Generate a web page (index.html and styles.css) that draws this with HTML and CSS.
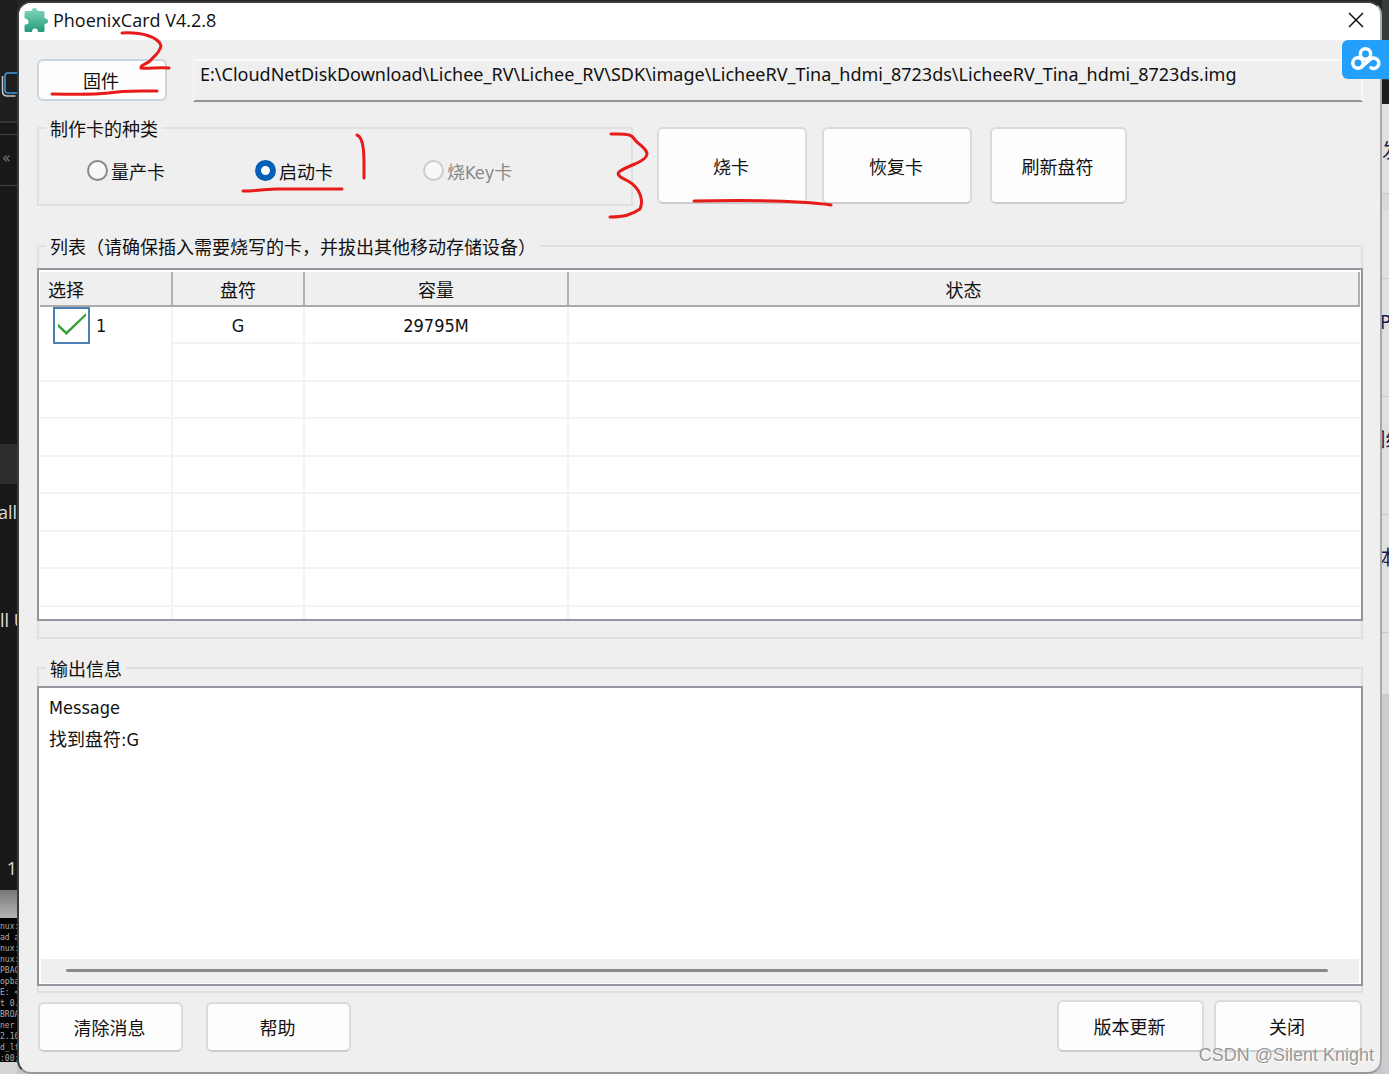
FILE: index.html
```html
<!DOCTYPE html>
<html lang="zh-CN">
<head>
<meta charset="utf-8">
<title>PhoenixCard V4.2.8</title>
<link rel="stylesheet" href="styles.css">
</head>
<body>
<div class="desktop">
  <aside class="behind-left" aria-hidden="true">
    <div class="editor">
      <div class="editor-top"><svg width="18" height="28" viewBox="0 0 18 28" fill="none"><path d="M2.500 6v15q0 5 5 5h8" stroke="#c8c8c8" stroke-width="1.500"/><rect x="5" y="3" width="20" height="20" rx="3" stroke="#3f9fe0" stroke-width="1.500"/></svg></div>
      <div class="editor-tabs"></div>
      <div class="editor-crumb">«</div>
      <div class="editor-space"></div>
      <div class="editor-active"></div>
      <div class="editor-word">tall</div>
      <div class="editor-word second">ll U</div>
      <div class="editor-page">1</div>
    </div>
    <div class="ledge"></div>
    <div class="terminal">
      <span>nux:</span><span>ad a</span><span>nux:</span><span>nux:</span><span>PBAC</span><span>opba</span><span>E: &lt;</span><span>t 0.</span><span>BROA</span><span>ner </span><span>2.16</span><span>d_lf</span><span>:00:</span>
    </div>
  </aside>

  <main class="window">
    <header class="titlebar">
      <svg class="app-icon" width="24" height="24" viewBox="0 0 24 24">
        <defs><linearGradient id="jig" x1="0" y1="0" x2="0" y2="1"><stop offset="0" stop-color="#7fd8c0"/><stop offset="1" stop-color="#259a78"/></linearGradient></defs>
        <path d="M2 3h5q1 0 .8-1Q8 0 10.500 0T13.200 2q-.2 1 .8 1h5q1.500 0 1.500 1.500v5q0 1 1 .9 2.500-.2 2.500 2.600t-2.500 2.800q-1-.1-1 .9v6q0 1.300-1.500 1.300h-4.500q-.8 0-.7-1 .2-2.500-2.800-2.500t-2.800 2.500q.1 1-.8 1H2q-1.500 0-1.500-1.300v-5.200q0-1 1-1 3 0 3-2.500T1.500 10.500q-1 0-1-1v-5Q.5 3 2 3z" fill="url(#jig)"/>
      </svg>
      <h1>PhoenixCard V4.2.8</h1>
      <button class="close" type="button" aria-label="关闭窗口"><svg width="16" height="16" viewBox="0 0 16 16" stroke="#111" stroke-width="1.500"><path d="M1 1l14 14M15 1L1 15"/></svg></button>
    </header>

    <form class="content">
      <div class="firmware">
        <button class="btn pick" type="button">固件</button>
        <output class="path" aria-label="固件路径">E:\CloudNetDiskDownload\Lichee_RV\Lichee_RV\SDK\image\LicheeRV_Tina_hdmi_8723ds\LicheeRV_Tina_hdmi_8723ds.img</output>
      </div>

      <div class="actions">
        <fieldset class="group kinds">
          <legend>制作卡的种类</legend>
          <div class="options">
            <label><input type="radio" name="kind">量产卡</label>
            <label><input type="radio" name="kind" checked>启动卡</label>
            <label class="off"><input type="radio" name="kind" disabled>烧Key卡</label>
          </div>
        </fieldset>
        <div class="big-buttons">
          <button class="btn big" type="button">烧卡</button>
          <button class="btn big" type="button">恢复卡</button>
          <button class="btn big last" type="button">刷新盘符</button>
        </div>
      </div>

      <fieldset class="group list">
        <legend>列表（请确保插入需要烧写的卡，并拔出其他移动存储设备）</legend>
        <div class="frame table-frame">
          <table>
            <colgroup><col class="c1"><col class="c2"><col class="c3"><col></colgroup>
            <thead><tr><th>选择</th><th>盘符</th><th>容量</th><th>状态</th></tr></thead>
            <tbody>
              <tr><td><label class="pickrow"><input type="checkbox" checked><span>1</span></label></td><td>G</td><td>29795M</td><td></td></tr>
              <tr><td></td><td></td><td></td><td></td></tr>
              <tr><td></td><td></td><td></td><td></td></tr>
              <tr><td></td><td></td><td></td><td></td></tr>
              <tr><td></td><td></td><td></td><td></td></tr>
              <tr><td></td><td></td><td></td><td></td></tr>
              <tr><td></td><td></td><td></td><td></td></tr>
              <tr><td></td><td></td><td></td><td></td></tr>
              <tr class="cut"><td></td><td></td><td></td><td></td></tr>
            </tbody>
          </table>
        </div>
      </fieldset>

      <fieldset class="group log">
        <legend>输出信息</legend>
        <div class="frame log-frame">
          <div class="messages"><p>Message</p><p>找到盘符:G</p></div>
          <div class="scrollbar"><div class="thumb"></div></div>
        </div>
      </fieldset>

      <footer class="bottom">
        <button class="btn" type="button">清除消息</button>
        <button class="btn" type="button">帮助</button>
        <button class="btn update" type="button">版本更新</button>
        <button class="btn quit" type="button">关闭</button>
      </footer>
    </form>
  </main>

  <aside class="behind-right" aria-hidden="true">
    <div class="r-top"></div><div class="r-bar"></div>
    <div class="r-item first">发</div><div class="r-band"></div>
    <div class="r-item short"></div>
    <div class="r-item">P</div>
    <div class="r-item">网络</div>
    <div class="r-item">体</div>
    <div class="r-item tail"></div>
  </aside>
</div>

<svg class="ink" width="840" height="230" viewBox="0 0 840 230" aria-hidden="true">
  <path d="M122 33c20-1 37 4 39 13-2 8-7 10-11 15-5 4-10 4-9 7 6 1 18-1 28 0"/>
  <path d="M52 94c20 0 40 1 56-1 18-3 32-2 49-2"/>
  <path d="M357 135c8 3 7 24 7 43"/>
  <path d="M243 191c15 0 24-2 34-2h65"/>
  <path d="M611 134c27-1 20 4 27 9 12 9 13 14-3 21-20 8-22 10-7 17 12 7 16 19 12 28-9 6-16 8-30 8"/>
  <path d="M694 201c55-1 102-1 137 4"/>
</svg>
<div class="cloud" aria-hidden="true"><svg width="32" height="26" viewBox="0 0 32 26" fill="none" stroke="#fff" stroke-width="3.500" stroke-linecap="round"><circle cx="15.500" cy="8" r="5.200"/><circle cx="8" cy="17" r="5.200"/><path d="M11.500 21L20 13.500a5.200 5.200 0 1 1 1 8.300"/></svg></div>
<div class="watermark">CSDN @Silent Knight</div>
</body>
</html>
```
FILE: styles.css
```css
* { box-sizing: border-box; }
body {
  margin: 0;
  position: relative;
  font-family: "DejaVu Sans Condensed", "Noto Sans CJK SC", sans-serif;
  font-size: 18px;
  line-height: 24px;
  color: #111;
}
button, input { font: inherit; color: inherit; margin: 0; }
.desktop {
  display: grid;
  grid-template-columns: 17px minmax(0, 1fr) 7px;
  min-height: 100vh;
  background: linear-gradient(to bottom, #242424 60px, #c4c6c8 60px);
}

/* Applications showing behind the window */
.behind-left { overflow: hidden; background: #d2d4d6; color: #ddd; white-space: nowrap; }
.editor { background: #181818; height: 890px; }
.editor-top { height: 123px; padding-top: 70px; background: #1e1e1e; border-bottom: 2px solid #333; }
.editor-tabs { height: 12px; border-bottom: 1px solid #444; }
.editor-crumb { height: 51px; line-height: 45px; border-bottom: 1px solid #444; color: #777; padding-left: 2px; font-size: 16px; }
.editor-space { height: 258px; }
.editor-active { height: 40px; background: #2d2d2d; }
.editor-word, .editor-page { display: flex; justify-content: flex-end; font-family: "Open Sans", sans-serif; height: 56px; line-height: 56px; }
.editor-word.second { height: 160px; line-height: 160px; justify-content: flex-start; }
.editor-page { height: 178px; line-height: 336px; }
.ledge { height: 28px; background: linear-gradient(#777, #b5b5b5); }
.terminal {
  height: 144px;
  background: #050505;
  color: #aaa;
  display: flex;
  flex-direction: column;
  justify-content: space-between;
  font: 8px/11px "DejaVu Sans Mono", monospace;
  padding-top: 3px;
}
.behind-right { overflow: hidden; background: #cccdd0; color: #1a1a4a; white-space: nowrap; }
.r-top { height: 80px; background: #363b3d; }
.r-bar { height: 24px; background: #1c1d20; }
.r-item { display: flex; justify-content: center; align-items: center; height: 118px; background: #e0e0e1; border-bottom: 1px solid #c8c8ca; padding-bottom: 32px; font-size: 20px; }
.r-item.first { height: 90px; padding: 4px 0 0 0; justify-content: flex-start; }
.r-band { height: 16px; background: #d8d9dd; }
.r-item.short { height: 69px; }
.r-item.tail { height: 62px; }

/* Window */
.window {
  margin-top: 1px;
  display: flex;
  flex-direction: column;
  border: 2px solid;
  border-color: #3c3c3c #aaa #999 #3c3c3c;
  border-radius: 14px;
  overflow: hidden;
  background: #efefef;
}
.titlebar { display: flex; align-items: center; height: 37px; background: #fff; padding: 0 16px 3px 5px; gap: 5px; }
.titlebar h1 { margin: 0; font: 400 18px/24px "Open Sans", sans-serif; }
.close { margin-left: auto; display: flex; padding: 0; border: 0; background: none; }
.content { flex: 1; display: flex; flex-direction: column; padding: 19px 17px 20px 18px; }

.btn {
  background: #fdfdfd;
  border: 2px solid #dadada;
  border-bottom-color: #ccc;
  border-radius: 6px;
  padding: 0 2px 0 0;
  width: 145px;
  height: 50px;
  font-family: "Noto Sans CJK SC", sans-serif;
}
.firmware { display: flex; gap: 26px; }
.pick { width: 130px; height: 42px; border-color: #c8d4e0; flex: none; }
.path {
  flex: 1;
  min-width: 0;
  height: 43px;
  padding: 1px 5px;
  border: 2px solid;
  border-color: #fafafa #f8f8f8 #929292 #f4f4f4;
  font-family: "Noto Sans", sans-serif;
  white-space: nowrap;
  overflow: hidden;
}

.group { margin: 0; padding: 0; min-width: 0; border: 2px solid #e0e0e0; }
.group legend { margin-left: 7px; padding: 2px 4px 0; height: 24px; white-space: nowrap; }
.actions { display: flex; gap: 24px; margin-top: 14px; }
.kinds { width: 596px; height: 90px; flex: none; }
.options { display: grid; grid-template-columns: 168px 168px 1fr; padding: 20px 0 0 48px; }
.options label { display: flex; align-items: flex-start; gap: 3px; line-height: 26px; }
.off { color: #888; }
.options input { appearance: none; width: 21px; height: 21px; border: 2px solid #8a8a8a; border-radius: 50%; background: #f8f8f8; }
.options input:checked { border: 6px solid #0560b8; background: #fff; }
.options input:disabled { border-color: #ccc; }
.big-buttons { display: flex; gap: 15px; padding-top: 11px; }
.big { width: 150px; height: 77px; }
.big.last { width: 137px; margin-left: 3px; }

.frame { border: 2px solid #93979f; margin: 0 -2px; background: #fff; }
.list { margin-top: 28px; padding-bottom: 16px; }
.list legend { margin-bottom: 10px; }
.table-frame { height: 353px; overflow: hidden; padding: 2px 1px 0; }
table { width: 100%; table-layout: fixed; border-collapse: separate; border-spacing: 0; }
.c1 { width: 133px; }
.c2 { width: 132px; }
.c3 { width: 264px; }
th { height: 35px; padding: 4px 2px 0 0; font-weight: 400; background: linear-gradient(to left, #b0b0b0 2px, #efefef 2px); border-bottom: 2px solid #aaa; }
th:first-child { text-align: left; padding-left: 8px; }
td { height: 37px; padding: 2px 0 0; text-align: center; border-right: 2px solid #f3f3f3; border-bottom: 2px solid #f3f3f3; }
tr:nth-child(even) td { height: 38px; }
td:first-child { padding: 0; }
td:last-child { border-right: 0; }
tbody tr:first-child td:first-child { border-bottom: 0; }
tbody tr.cut td { height: 13px; border-bottom: 0; }
.pickrow { display: flex; align-items: center; height: 37px; padding-left: 13px; gap: 6px; }
.pickrow input {
  appearance: none;
  width: 37px;
  height: 37px;
  border: 2px solid #4a7fb5;
  background: #fff;
  padding: 4px 3px;
}
.pickrow input::before { content: ""; display: block; width: 28px; height: 22px; background: #38a038; clip-path: polygon(0 48%, 0 64%, 30% 100%, 100% 14%, 100% 0, 30% 84%); }

.log { margin-top: 17px; flex: 1; display: flex; flex-direction: column; padding-bottom: 5px; }
.log legend { margin-bottom: 6px; }
.log-frame { flex: 1; height: 300px; display: flex; flex-direction: column; }
.messages { flex: 1; padding: 4px 10px; line-height: 32px; }
.messages p { margin: 0; }
.scrollbar { height: 24px; margin: 0 2px 1px; padding: 10px 31px 0 25px; background: #efefef; }
.thumb { height: 3px; border-radius: 2px; background: #8a8a8a; }

.bottom { display: flex; align-items: flex-end; gap: 23px; padding: 7px 1px 0; }
.update { margin-left: auto; width: 147px; height: 52px; }
.quit { width: 148px; height: 52px; margin-left: -13px; }

/* Things lying over the window */
.ink { position: absolute; left: 0; top: 0; pointer-events: none; fill: none; stroke: #e81a1a; stroke-width: 3; stroke-linecap: round; }
.cloud { position: absolute; right: 0; top: 40px; width: 47px; height: 39px; padding: 6px 8px; background: #24a0fc; border-radius: 6px 0 0 6px; }
.watermark { position: absolute; right: 15px; bottom: 7px; font: 18px/24px "Liberation Sans", sans-serif; color: #999; text-shadow: 1px 1px 0 #fff; }
```
